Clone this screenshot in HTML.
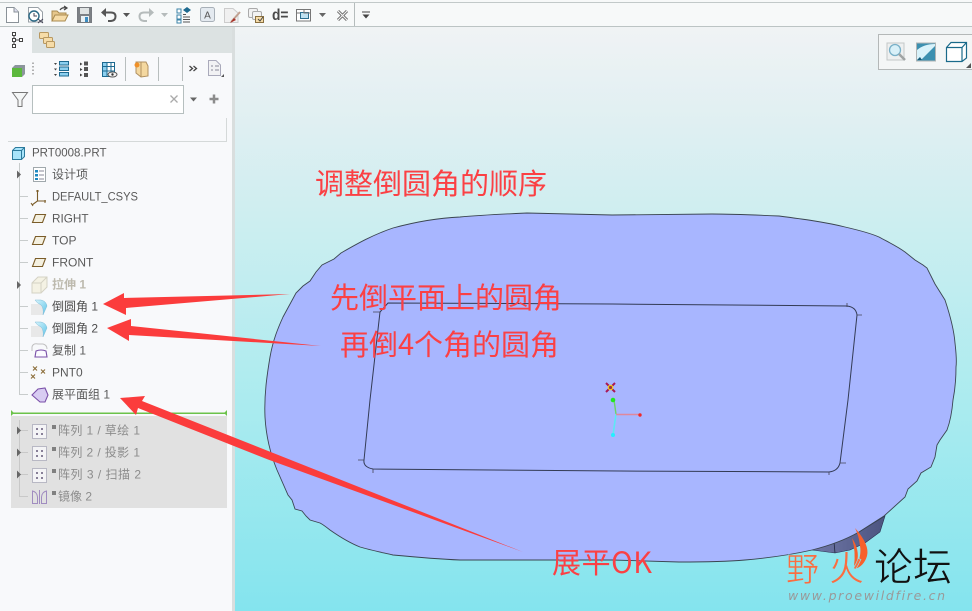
<!DOCTYPE html>
<html><head><meta charset="utf-8">
<style>
html,body{margin:0;padding:0;width:972px;height:611px;overflow:hidden;background:#fff}
svg{display:block;position:absolute;left:0;top:0}
text{font-family:"Liberation Sans","Noto Sans CJK SC",sans-serif}
.t{font-size:12px;fill:#5a5a5a}
.g{font-size:12px;fill:#8c8c8c}
.r{font-size:29px;fill:#fb4044;font-family:"Noto Sans CJK SC","Liberation Sans",sans-serif}
</style></head><body>
<svg width="972" height="611" viewBox="0 0 972 611">
<defs>
<linearGradient id="bg" x1="0" y1="0" x2="0" y2="1">
<stop offset="0" stop-color="#f0f3f4"/><stop offset=".17" stop-color="#dfeff2"/><stop offset=".33" stop-color="#cdeef0"/><stop offset=".66" stop-color="#a9ebef"/><stop offset="1" stop-color="#84e4ee"/>
</linearGradient>
<linearGradient id="dk" x1="0" y1="0" x2="1" y2="0"><stop offset="0" stop-color="#7078a8"/><stop offset="1" stop-color="#4c5480"/></linearGradient>
<linearGradient id="bl" x1="0" y1="0" x2="1" y2="1"><stop offset="0" stop-color="#d8f4fc"/><stop offset="1" stop-color="#5cc4e8"/></linearGradient>
</defs>

<!-- canvas -->
<rect x="235" y="27" width="737" height="584" fill="url(#bg)"/>
<!-- dark underside -->
<path d="M885 516L880 532 865 543 850 550 835 553 812 550 859 532Z" fill="url(#dk)" stroke="#2a2f50" stroke-width=".6"/>
<path d="M834 542L835 553" stroke="#222840" stroke-width=".8"/>
<!-- blob -->
<path d="M265 417C264 395 267 375 270 357C273 340 278 328 283 317L296 293 303 286 310 281 316 272 322 265 334 259 341 253C355 245 372 235 393 228C415 222 438 218 460 217C482 215 505 214 527 213L612 215 712 214C735 214 757 215 779 216C802 219 825 222 845 227C858 230 870 233 879 237C888 242 897 246 905 252L915 260 923 265 927 268L935 284 945 300C950 315 954 330 955 343C956 352 957 360 956 367C956 378 955 390 953 400C952 412 950 422 947 430L940 440 937 445 935 457 931 467 921 473 917 481 908 489 905 497 884 516 859 532C845 540 828 546 812 550C790 555 768 558 745 560C722 562 700 562 679 562L612 560 520 560C500 560 480 560 460 560C436 559 414 557 393 555C380 552 370 550 360 547C350 543 340 537 330 530C325 526 322 524 320 523L310 520 306 516 302 511 295 509 292 500 288 495 277 470C270 453 266 435 265 417Z" fill="#a8b6ff" stroke="#3a4550" stroke-width=".9"/>
<!-- inner rectangle -->
<path d="M388 303L612 304 847 306Q856 307 857 315L848 400 840 463Q838 471 829 472L620 471 373 469Q363 467 364 460L370 400 380 312 388 303Z" fill="none" stroke="#333b55" stroke-width="1"/>
<path d="M847 303V307M857 315H862M840 463H846M829 472V475M373 469V473M358 460H364M380 312H373" stroke="#445" stroke-width=".8" fill="none"/>
<!-- csys -->
<path d="M614 400L616 414" stroke="#6cd468" stroke-width="1.4"/>
<path d="M616 414L613 435" stroke="#5ce8f4" stroke-width="1.6"/>
<path d="M616 414.500H640" stroke="#e0889c" stroke-width="1.4"/>
<circle cx="613" cy="400" r="2.300" fill="#22e622"/><circle cx="613" cy="435" r="2" fill="#22f0ff"/><circle cx="640" cy="415" r="1.700" fill="#f02828"/>
<path d="M606 383L615 392M615 383L606 392" stroke="#a81858" stroke-width="2"/>
<circle cx="610.500" cy="387.500" r="2.200" fill="#a03040" stroke="#f0d020" stroke-width="1.200"/>

<!-- left panel -->
<rect x="0" y="27" width="232" height="584" fill="#f8f9fb"/>
<rect x="232" y="27" width="3" height="584" fill="#d9dede"/>
<rect x="32" y="27" width="200" height="26" fill="#dce2e2"/>

<!-- toolbar -->
<rect x="0" y="0" width="972" height="27" fill="#f7f9f9"/>
<rect x="0" y="2" width="972" height="1" fill="#c2c9c9"/>
<rect x="0" y="26" width="972" height="1" fill="#bcc4c4"/>
<rect x="354" y="3" width="1" height="23" fill="#b5bcbc"/>
<!-- new -->
<path d="M6.500 7.500H14L18.500 12V22.500H6.500Z" fill="#fff" stroke="#8a9298"/><path d="M14 7.500V12H18.500" fill="#dde" stroke="#8a9298"/>
<!-- open model clock -->
<path d="M28.500 7.500H38L42.500 12V22H28.500Z" fill="#fff" stroke="#98a0a6"/>
<circle cx="34" cy="16" r="5" fill="#fff" stroke="#2c6a86" stroke-width="1.400"/><path d="M34 13V16H37M38 19L43 23M43 19L38 23" stroke="#445" fill="none"/>
<!-- open -->
<path d="M52 21V11H57L59 13H66V15" fill="#e6c78c" stroke="#a88a50"/><path d="M52 21L55 15H68L65 21Z" fill="#f6dca8" stroke="#a88a50"/><path d="M60 10Q62 7 66 8M64 6L67 8 64 10" fill="none" stroke="#444" stroke-width="1.200"/>
<!-- save -->
<rect x="77.500" y="7.500" width="14" height="15" fill="#7c8084" stroke="#777b80"/><rect x="80" y="8" width="9" height="6" fill="#dfe3e3"/><rect x="81" y="16" width="8" height="6" fill="#e8f0f4"/><rect x="85" y="17" width="3" height="5" fill="#3c8cc0"/>
<!-- undo -->
<path d="M104 12.500H111Q115.500 12.500 115.500 16.500T111 21H108" fill="none" stroke="#555" stroke-width="2"/><path d="M101 12.500L106 8V17Z" fill="#555"/>
<path d="M123 13H130L126.500 17Z" fill="#555"/>
<!-- redo -->
<path d="M151 12.500H144Q139.500 12.500 139.500 16.500T144 21H147" fill="none" stroke="#b5bbbb" stroke-width="2"/><path d="M154 12.500L149 8V17Z" fill="#b5bbbb"/>
<path d="M161 13H168L164.500 17Z" fill="#b5bbbb"/>
<!-- regen -->
<path d="M177 9h4v4h-4zM177 15h4v4h-4zM177 20h4v3h-4z" fill="#fff" stroke="#3c84a8"/><path d="M183 17H190M183 19.500H190M183 22H190M183 14.500H186" stroke="#555"/><path d="M183 10L187 7V13ZM191 10L187 7V13Z" fill="#1e6a90"/>
<!-- A -->
<rect x="200.500" y="7.500" width="14" height="14" rx="2" fill="#e4eaf0" stroke="#a8b0b8"/><text x="207.500" y="18.500" text-anchor="middle" font-size="10" fill="#555">A</text>
<!-- paint -->
<path d="M224.500 8.500H233L238 13V22.500H224.500Z" fill="#f0f0f0" stroke="#ccc"/><path d="M231 22L240 12" stroke="#c0a090" stroke-width="2"/><path d="M230 23L234 18 236 20Z" fill="#a83028"/>
<!-- copy -->
<rect x="248.500" y="8.500" width="9" height="9" rx="1.500" fill="#f2f2f2" stroke="#aaa"/><rect x="252.500" y="11.500" width="9" height="8" rx="1.500" fill="#f2f2f2" stroke="#aaa"/><rect x="255.500" y="16.500" width="8" height="6" fill="#f6dca8" stroke="#8a7040"/><path d="M258 19L260 21 263 17" fill="none" stroke="#444"/>
<!-- d= -->
<text x="272" y="20" font-size="16" font-weight="bold" fill="#4a4a4a" textLength="16.500" lengthAdjust="spacingAndGlyphs">d=</text>
<!-- windows -->
<path d="M296.500 9.500H310.500V21H296.500Z" fill="#fff" stroke="#777"/><rect x="300.500" y="12.500" width="8" height="6" fill="#bfe2f2" stroke="#2c7090"/><path d="M296 13H300M310 13H304V9" stroke="#777" fill="none"/>
<path d="M319 13H326L322.500 17Z" fill="#666"/>
<!-- x -->
<path d="M338 11L347 20M347 11L338 20" stroke="#666" stroke-width="3"/><path d="M338 11L347 20M347 11L338 20" stroke="#f4f4f4" stroke-width="1.200"/>
<!-- menu -->
<path d="M362 12H370" stroke="#444"/><path d="M362.500 14.500H369.500L366 18.500Z" fill="#444"/>

<!-- tab icons -->
<path d="M12.500 32.500h3v3h-3zM12.500 38.500h3v3h-3zM12.500 44.500h3v3h-3zM19.500 38.500h3v3h-3z" fill="#fff" stroke="#444"/><path d="M14 36V38M14 42V44M16 40H19" stroke="#444"/>
<rect x="39.500" y="32.500" width="9" height="6" rx="1" fill="#f6dca8" stroke="#b89860"/><rect x="43.500" y="37.500" width="9" height="6" rx="1" fill="#f6dca8" stroke="#b89860"/><rect x="46.500" y="41.500" width="8" height="6" rx="1" fill="#f6dca8" stroke="#b89860"/>

<!-- row 2 -->
<rect x="12" y="68" width="10" height="9" fill="#5cb83c"/><path d="M12 68L15 65H25V74L22 77V68Z" fill="#8c959c"/>
<path d="M33 62.500v1.500M33 66v1.500M33 69.500v1.500M33 73v1.500" stroke="#999" stroke-width="1.500"/>
<path d="M54 63h3l-1.500 2ZM54 68.500h3l-1.500 2ZM54 74h3l-1.500 2Z" fill="#444"/>
<rect x="59.500" y="61.500" width="9" height="3.500" fill="#8cd0f0" stroke="#1e6a90"/><rect x="59.500" y="67" width="9" height="3.500" fill="#8cd0f0" stroke="#1e6a90"/><rect x="59.500" y="72.500" width="9" height="3.500" fill="#8cd0f0" stroke="#1e6a90"/>
<path d="M80 62.500l2.500 1.500-2.500 1.500ZM80 68l2.500 1.500-2.500 1.500ZM80 73.500l2.500 1.500-2.500 1.500Z" fill="#444"/><rect x="84" y="61.500" width="4" height="4" fill="#555"/><rect x="84" y="67" width="4" height="4" fill="#555"/><rect x="84" y="73" width="4" height="4" fill="#555"/>
<rect x="102.500" y="62.500" width="12" height="14" fill="#fff" stroke="#1e6a90"/><rect x="103" y="63" width="4" height="13" fill="#8cd0f0"/><path d="M102 66.500H114M107 62V77M111 62V77M102 71H114" stroke="#1e6a90"/><ellipse cx="112.500" cy="74.500" rx="4.500" ry="2.500" fill="#f4f4f4" stroke="#555"/><circle cx="112.500" cy="74.500" r="1.200" fill="#333"/>
<rect x="125" y="57" width="1" height="24" fill="#b8bebe"/>
<path d="M136 62H146L148 66V76L141 77 136 73Z" fill="#f4d8a0" stroke="#b09060"/><path d="M141 62V77" stroke="#b09060"/><circle cx="137" cy="65" r="2.500" fill="#f09028"/>
<rect x="158" y="57" width="1" height="24" fill="#b8bebe"/>
<rect x="182" y="57" width="1" height="24" fill="#b8bebe"/>
<path d="M189.500 66l3 2.500-3 2.500M193.500 66l3 2.500-3 2.500" fill="none" stroke="#444" stroke-width="1.300"/>
<path d="M208.500 60.500H216L220.500 65V75.500H208.500Z" fill="#f2f2f4" stroke="#aab"/><path d="M211 66h2M215 66h4M211 70h2M215 70h4" stroke="#889"/><path d="M224 77h-3l3-3Z" fill="#555"/>

<!-- filter row -->
<path d="M12.500 92.500H27.500L22 100V106.500H18V100Z" fill="#f4f6f6" stroke="#777"/>
<rect x="32.500" y="85.500" width="151" height="28" fill="#fff" stroke="#b6bfbf"/>
<path d="M170.500 95.500L177.500 102.500M177.500 95.500L170.500 102.500" stroke="#aaa" stroke-width="1.300"/>
<path d="M190 97.500H197L193.500 101.500Z" fill="#666"/>
<path d="M214 94.500V103.500M209.500 99H218.500" stroke="#8c8c8c" stroke-width="2.500"/>

<!-- list box -->
<path d="M226.500 118V141.500H8" fill="none" stroke="#d5d9d9"/>

<!-- tree -->
<path d="M19.500 163V394.500H28M19 196.500H28M19 218.500H28M19 240.500H28M19 262.500H28M19 306.500H28M19 328.500H28M19 350.500H28M19 372.500H28" fill="none" stroke="#c8cccc"/>
<path d="M17 170.500L21 174.500 17 178.500ZM17 281L21 285 17 289Z" fill="#666"/>
<!-- PRT cube -->
<path d="M12.500 150.500L15.500 147.500H24.500V156.500L21.500 159.500H12.500Z" fill="#a8e4fa" stroke="#2c7a9c"/><path d="M12.500 150.500H21.500V159.500M21.500 150.500L24.500 147.500" fill="none" stroke="#2c7a9c"/>
<text class="t" x="32" y="156.500" textLength="74.500" lengthAdjust="spacingAndGlyphs">PRT0008.PRT</text>
<rect x="33.500" y="167.500" width="12" height="14" fill="#fff" stroke="#a0a8ac"/><rect x="35" y="170" width="3" height="2.500" fill="#1e88c0"/><rect x="35" y="174" width="3" height="2.500" fill="#1e88c0"/><rect x="35" y="178" width="3" height="2" fill="#1e88c0"/><path d="M39 171H44M39 175H44M39 179H44" stroke="#889"/>
<text class="t" x="52" y="178.500">设计项</text>
<path d="M37.500 190V201L32 205M37.500 201H46" fill="none" stroke="#7a5c28" stroke-width="1.100"/><path d="M36 191H39M45 200V203M31 203L33 206" stroke="#7a5c28"/>
<text class="t" x="52" y="200.500" textLength="86" lengthAdjust="spacingAndGlyphs">DEFAULT_CSYS</text>
<path d="M35.500 214.500H45.500L42.500 222.500H32.500Z" fill="#f4f0e0" stroke="#7a5c28" stroke-width="1.100"/>
<text class="t" x="52" y="222.500" textLength="36.500" lengthAdjust="spacingAndGlyphs">RIGHT</text>
<path d="M35.500 236.500H45.500L42.500 244.500H32.500Z" fill="#f4f0e0" stroke="#7a5c28" stroke-width="1.100"/>
<text class="t" x="52" y="244.500">TOP</text>
<path d="M35.500 258.500H45.500L42.500 266.500H32.500Z" fill="#f4f0e0" stroke="#7a5c28" stroke-width="1.100"/>
<text class="t" x="52" y="266.500">FRONT</text>
<path d="M32 283L38 277H47V287L41 293H32Z" fill="#f4f2e4" stroke="#d4d2c4"/><path d="M32 283H41V293M41 283L47 277" fill="none" stroke="#d4d2c4"/>
<text x="52" y="288.500" font-size="12" font-weight="bold" fill="#bdbaae">拉伸 1</text>
<rect x="31" y="304" width="12" height="11" fill="#e8e8e8"/><path d="M35 300H41Q46 301 47 306L43 315Q44 308 41 305 37 303 35 300Z" fill="url(#bl)" stroke="#7fbcd8" stroke-width=".5"/>
<text class="t" x="52" y="310.500" style="fill:#4c4c4c">倒圆角 1</text>
<rect x="31" y="326" width="12" height="11" fill="#e8e8e8"/><path d="M35 322H41Q46 323 47 328L43 337Q44 330 41 327 37 325 35 322Z" fill="url(#bl)" stroke="#7fbcd8" stroke-width=".5"/>
<text class="t" x="52" y="332.500" style="fill:#4c4c4c">倒圆角 2</text>
<path d="M32 351V347Q33 343 38 344H43Q47 345 47 349" fill="none" stroke="#c0c0c0"/><path d="M35 357L36 351Q41 349 46 351L47 357Z" fill="#fbfaff" stroke="#7a50a8" stroke-width="1.100"/>
<text class="t" x="52" y="354.500">复制 1</text>
<path d="M33 366.500l4 4M37 366.500l-4 4M41 369.500l4 4M45 369.500l-4 4M31 374.500l4 4M35 374.500l-4 4" stroke="#8a6c38" stroke-width="1.100"/>
<text class="t" x="52" y="376.500">PNT0</text>
<path d="M32 395L38 389 45 388 48 395 45 402 40 402Z" fill="#d8ccf2" stroke="#7a50a8" stroke-width="1.100"/>
<text class="t" x="52" y="398.500">展平面组 1</text>

<!-- insert line -->
<rect x="11" y="416" width="216" height="92" fill="#e1e1e1"/>
<rect x="11" y="412.500" width="216" height="1.500" fill="#6cc24a"/>
<path d="M11 410V416L14 413ZM227 410V416L224 413Z" fill="#6cc24a"/>
<path d="M19.500 420V496.500H28" fill="none" stroke="#c8c8c8"/><path d="M19 430.500H28M19 452.500H28M19 474.500H28" stroke="#c8c8c8"/>
<path d="M17 426.500L21 430.500 17 434.500ZM17 448.500L21 452.500 17 456.500ZM17 470.500L21 474.500 17 478.500Z" fill="#666"/>
<g fill="#f4f4f6" stroke="#b8b8c4">
<rect x="32.500" y="424.500" width="14" height="14"/><rect x="32.500" y="446.500" width="14" height="14"/><rect x="32.500" y="468.500" width="14" height="14"/>
</g>
<g fill="#888098">
<rect x="36" y="428" width="2" height="2"/><rect x="41" y="428" width="2" height="2"/><rect x="36" y="433" width="2" height="2"/><rect x="41" y="433" width="2" height="2"/>
<rect x="36" y="450" width="2" height="2"/><rect x="41" y="450" width="2" height="2"/><rect x="36" y="455" width="2" height="2"/><rect x="41" y="455" width="2" height="2"/>
<rect x="36" y="472" width="2" height="2"/><rect x="41" y="472" width="2" height="2"/><rect x="36" y="477" width="2" height="2"/><rect x="41" y="477" width="2" height="2"/>
</g>
<path d="M32.500 491V503.500H37.500V497Q37 492 32.500 491ZM46.500 491V503.500H41.500V497Q42 492 46.500 491ZM39.500 490V504" fill="none" stroke="#a08cc0"/>
<g fill="#808080"><rect x="52" y="425" width="4" height="4"/><rect x="52" y="447" width="4" height="4"/><rect x="52" y="469" width="4" height="4"/><rect x="52" y="491" width="4" height="4"/></g>
<text class="g" x="58" y="434.500" textLength="82">阵列 1 / 草绘 1</text>
<text class="g" x="58" y="456.500" textLength="82">阵列 2 / 投影 1</text>
<text class="g" x="58" y="478.500" textLength="83">阵列 3 / 扫描 2</text>
<text class="g" x="58" y="500.500">镜像 2</text>

<!-- view toolbar -->
<path d="M972 34.500H878.500V69.500H972" fill="#f4f6f6" stroke="#b4b8b8"/>
<rect x="887" y="43" width="17" height="17" fill="#eef0f0" stroke="#c4c8c8"/>
<circle cx="895" cy="50" r="5.500" fill="#d8f0f8" stroke="#78b0c8" stroke-width="1.300"/><path d="M899 54L905 60" stroke="#a0a4a4" stroke-width="2.500"/>
<rect x="916.500" y="43" width="19" height="18" fill="#3c90b0" stroke="#b0b4b4"/><path d="M917 60V50Q924 44 935 44V46L921 60Z" fill="#d8f2fa"/><path d="M917 60H922L920 57Z" fill="#155a78"/>
<path d="M946.500 47.500L951 42.500H966.500V58L962 61.500H946.500Z" fill="#fff" stroke="#1a6a8a" stroke-width="1.200"/><path d="M946.500 47.500H962V61.500M962 47.500L966.500 42.500" fill="none" stroke="#1a6a8a" stroke-width="1.200"/><path d="M971 63V68H966Z" fill="#555"/>

<!-- arrows -->
<g fill="#fb3c3c">
<path d="M103 304L124 293 124 298 290 294 126 308 126 315Z"/>
<path d="M107 328L131 319 131 326 321 346 129 335 129 341Z"/>
<path d="M120 398L145 396 142 401 523 552 268 459.500 138 408 136 415Z"/>
</g>
<!-- red text -->
<text class="r" x="315" y="194">调整倒圆角的顺序</text>
<text class="r" x="330" y="308">先倒平面上的圆角</text>
<text class="r" x="340" y="355" textLength="219">再倒4个角的圆角</text>
<text class="r" x="552" y="573" textLength="100">展平OK</text>

<!-- logo -->
<path d="M855 528Q870 545 867 556 864 566 855 569 862 556 860 546 859 536 855 528Z" fill="#f8602c"/>
<path d="M852 538Q860 550 857 562L854 566Q856 552 852 538Z" fill="#f8602c"/>
<g stroke="#8ce6ee" stroke-width=".6" style="font-family:'WenQuanYi Zen Hei','Noto Sans CJK SC',sans-serif">
<text x="786" y="581" font-size="33" fill="#fb6d40" style="font-family:'WenQuanYi Zen Hei','Noto Sans CJK SC',sans-serif">野</text>
<text x="829" y="581" font-size="35" fill="#fb6d40" style="font-family:'WenQuanYi Zen Hei','Noto Sans CJK SC',sans-serif">火</text>
<text x="874" y="581" font-size="39" fill="#111" style="font-family:'WenQuanYi Zen Hei','Noto Sans CJK SC',sans-serif">论坛</text>
</g>
<text x="788" y="600" font-size="12.500" font-style="italic" fill="#999" style="letter-spacing:1.680px;font-family:'DejaVu Sans',sans-serif">www.proewildfire.cn</text>
</svg>
</body></html>
